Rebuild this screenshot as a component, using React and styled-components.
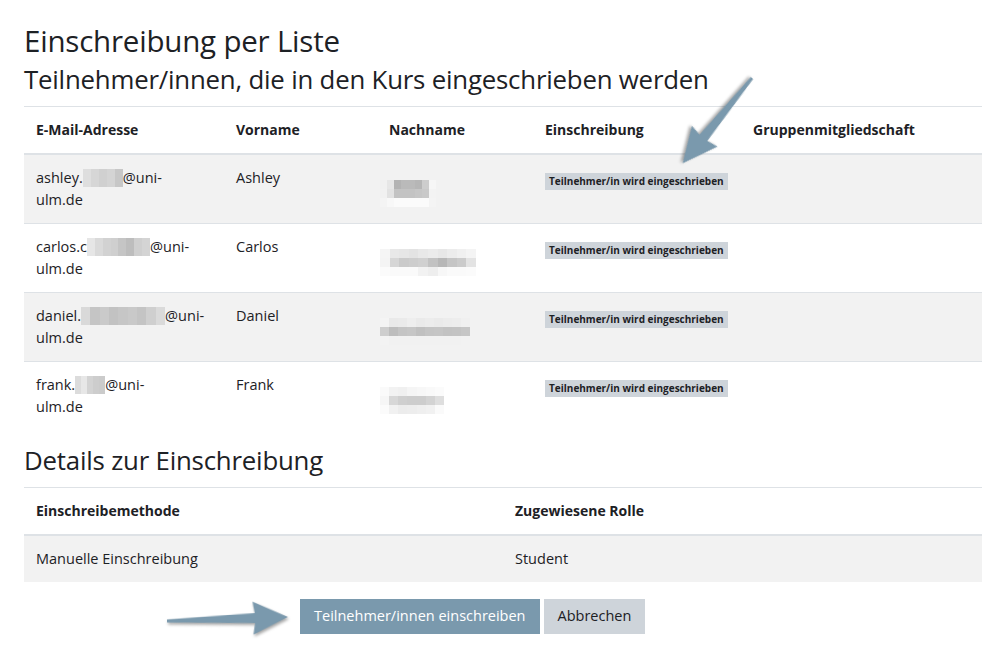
import React from 'react'
import styled, { createGlobalStyle } from 'styled-components'

const GlobalStyle = createGlobalStyle`
  html, body { margin: 0; padding: 0; background: #fff; }
  body {
    font-family: "Open Sans", "Noto Sans", sans-serif;
    color: #1d2125;
  }
`

const participants = [
  {
    user: 'ashley.',
    mail: [['#dedede', '#d6d6d6', '#d0d0d0', '#d4d4d4', '#c7c7c7']],
    mailWidth: 40,
    first: 'Ashley',
    last: [
      ['#f0f0f0', '#e6e6e6', '#b3b3b3', '#bababa', '#bababa', '#b6b6b6', '#cdcdcd', '#f6f6f6'],
      ['#f1f1f1', '#e2e2e2', '#c3c3c3', '#c3c3c3', '#c3c3c3', '#c6c6c6', '#c9c9c9', '#f3f3f3'],
      ['#f4f4f4', '#f8f8f8', '#fbfbfb', '#fbfbfb', '#fbfbfb', '#fbfbfb', '#fbfbfb', '#f4f4f4']
    ],
    lastWidth: 56
  },
  {
    user: 'carlos.c',
    mail: [['#e6e6e6', '#dadada', '#d2d2d2', '#cfcfcf', '#c5c5c5', '#bdbdbd', '#cfcfcf', '#d4d4d4']],
    mailWidth: 63,
    first: 'Carlos',
    last: [
      ['#f5f5f5', '#e8e8e8', '#e6e6e6', '#e3e3e3', '#e8e8e8', '#ebebeb', '#e7e7e7', '#ececec', '#f0f0f0', '#f4f4f4'],
      ['#f4f4f4', '#d6d6d6', '#cacaca', '#cdcdcd', '#d0d0d0', '#c2c2c2', '#b7b7b7', '#c5c5c5', '#cbcbcb', '#e3e3e3'],
      ['#fbfbfb', '#fafafa', '#fafafa', '#fafafa', '#f2f2f2', '#eeeeee', '#f7f7f7', '#fafafa', '#fafafa', '#fbfbfb']
    ],
    lastWidth: 96
  },
  {
    user: 'daniel.',
    mail: [['#d9d9d9', '#c5c5c5', '#cacaca', '#c2c2c2', '#c6c6c6', '#c9c9c9', '#c4c4c4', '#cfcfcf', '#dadada']],
    mailWidth: 84,
    first: 'Daniel',
    last: [
      ['#f4f4f4', '#e9e9e9', '#eaeaea', '#eeeeee', '#eaeaea', '#ececec', '#eaeaea', '#ececec', '#ededed', '#f0f0f0'],
      ['#cecece', '#bdbdbd', '#c4c4c4', '#c6c6c6', '#c0c0c0', '#c4c4c4', '#c5c5c5', '#c2c2c2', '#c3c3c3', '#c6c6c6'],
      ['#f3f3f3', '#f1f1f1', '#f1f1f1', '#f1f1f1', '#f1f1f1', '#f1f1f1', '#f1f1f1', '#f1f1f1', '#f1f1f1', '#f2f2f2']
    ],
    lastWidth: 90
  },
  {
    user: 'frank.',
    mail: [['#dcdcdc', '#e7e7e7', '#d3d3d3', '#cdcdcd', '#cbcbcb']],
    mailWidth: 30,
    first: 'Frank',
    last: [
      ['#fafafa', '#f2f2f2', '#f0f0f0', '#f5f5f5', '#f7f7f7', '#f9f9f9', '#fbfbfb'],
      ['#f6f6f6', '#d7d7d7', '#cfcfcf', '#cdcdcd', '#cdcdcd', '#d3d3d3', '#dedede'],
      ['#fbfbfb', '#f1f1f1', '#ececec', '#ededed', '#efefef', '#f1f1f1', '#fafafa']
    ],
    lastWidth: 64
  }
]

const Blur = ({ rows, width, height }) => (
  <Mosaic style={{ width, height }}>
    {rows.map((row, i) => (
      <MosaicRow key={i}>
        {row.map((c, j) => (
          <MosaicCell key={j} style={{ background: c }} />
        ))}
      </MosaicRow>
    ))}
  </Mosaic>
)

const Arrow = ({ x, y, length, angle }) => {
  const head = 33
  const w = 36
  const h = length - head
  return (
    <ArrowSvg
      width={length}
      height={w}
      viewBox={`0 ${-w / 2} ${length} ${w}`}
      style={{ left: x, top: y - w / 2, transform: `rotate(${angle}deg)` }}
    >
      <path
        d={`M0 -1.6 L${h} -5 L${h - 2} -16.5 L${length} 0 L${h - 2} 16.5 L${h} 5 L0 1.6 Z`}
        fill="#7a99ad"
      />
    </ArrowSvg>
  )
}

const App = () => {
  return (
    <Page>
      <GlobalStyle />
      <Title>Einschreibung per Liste</Title>
      <SubTitle>Teilnehmer/innen, die in den Kurs eingeschrieben werden</SubTitle>
      <Table>
        <colgroup>
          <col style={{ width: 200 }} />
          <col style={{ width: 153 }} />
          <col style={{ width: 156 }} />
          <col style={{ width: 208 }} />
          <col />
        </colgroup>
        <thead>
          <tr>
            <Th>E-Mail-Adresse</Th>
            <Th>Vorname</Th>
            <Th>Nachname</Th>
            <Th>Einschreibung</Th>
            <Th>Gruppenmitgliedschaft</Th>
          </tr>
        </thead>
        <tbody>
          {participants.map((p, i) => (
            <Row key={i} $striped={i % 2 === 0}>
              <Td>
                {p.user}
                <Blur rows={p.mail} width={p.mailWidth} height={18} />
                @uni-
                <br />
                ulm.de
              </Td>
              <Td>{p.first}</Td>
              <Td>
                <LastName>
                  <Blur rows={p.last} width={p.lastWidth} height={27} />
                </LastName>
              </Td>
              <Td>
                <Badge>Teilnehmer/in wird eingeschrieben</Badge>
              </Td>
              <Td />
            </Row>
          ))}
        </tbody>
      </Table>

      <SectionTitle>Details zur Einschreibung</SectionTitle>
      <Table>
        <colgroup>
          <col style={{ width: '50%' }} />
          <col style={{ width: '50%' }} />
        </colgroup>
        <thead>
          <tr>
            <Th>Einschreibemethode</Th>
            <Th>Zugewiesene Rolle</Th>
          </tr>
        </thead>
        <tbody>
          <Row $striped>
            <Td>Manuelle Einschreibung</Td>
            <Td>Student</Td>
          </Row>
        </tbody>
      </Table>

      <Actions>
        <Button $primary>Teilnehmer/innen einschreiben</Button>
        <Button>Abbrechen</Button>
      </Actions>

      <Arrow x={752} y={78} length={110} angle={129.1} />
      <Arrow x={167} y={621} length={121} angle={-1.9} />
    </Page>
  )
}

export default App

const Page = styled.div`
  position: relative;
  width: 1007px;
  height: 658px;
  box-sizing: border-box;
  padding: 22px 25px 0 24px;
  overflow: hidden;
`

const Title = styled.h2`
  margin: 0;
  font-size: 29.5px;
  font-weight: 400;
  line-height: 37px;
  letter-spacing: -0.2px;
`

const SubTitle = styled.h3`
  margin: 2px 0 9px;
  font-size: 25.8px;
  font-weight: 400;
  line-height: 36px;
  letter-spacing: -0.2px;
`

const SectionTitle = styled(SubTitle)`
  margin: 12px 0 9px;
`

const Table = styled.table`
  width: 958px;
  border-collapse: collapse;
  table-layout: fixed;
  font-size: 14.5px;
  line-height: 22px;
`

const Th = styled.th`
  text-align: left;
  font-size: 14px;
  font-weight: 700;
  padding: 12px 12px;
  border-top: 1px solid #dee2e6;
  border-bottom: 2px solid #dee2e6;
  vertical-align: top;
`

const Row = styled.tr`
  background: ${p => (p.$striped ? '#f2f2f2' : '#fff')};
`

const Td = styled.td`
  padding: 12px 12px;
  border-top: 1px solid #dee2e6;
  vertical-align: top;
  white-space: nowrap;
`

const Mosaic = styled.span`
  display: inline-flex;
  flex-direction: column;
  vertical-align: -4px;
`

const MosaicRow = styled.span`
  display: flex;
  flex: 1;
`

const MosaicCell = styled.span`
  flex: 1;
`

const LastName = styled.span`
  display: inline-block;
  margin: 2px 0 0 -9px;
`

const Badge = styled.span`
  display: inline-block;
  background: #ced4da;
  color: #1d2125;
  font-size: 10px;
  font-weight: 700;
  line-height: 17px;
  padding: 0 4px;
  margin-top: 6px;
  vertical-align: top;
`

const Actions = styled.div`
  display: flex;
  gap: 4px;
  margin: 17px 0 0 276px;
`

const Button = styled.button`
  font-family: inherit;
  font-size: 14.5px;
  line-height: 22px;
  padding: 6px 14px 7px;
  border: 0;
  border-radius: 0;
  background: ${p => (p.$primary ? '#7a99ad' : '#ced4da')};
  color: ${p => (p.$primary ? '#fff' : '#1d2125')};
`

const ArrowSvg = styled.svg`
  position: absolute;
  transform-origin: 0 50%;
  pointer-events: none;
  filter: drop-shadow(1px 2px 1.5px rgba(0, 0, 0, 0.35));
  overflow: visible;
`
